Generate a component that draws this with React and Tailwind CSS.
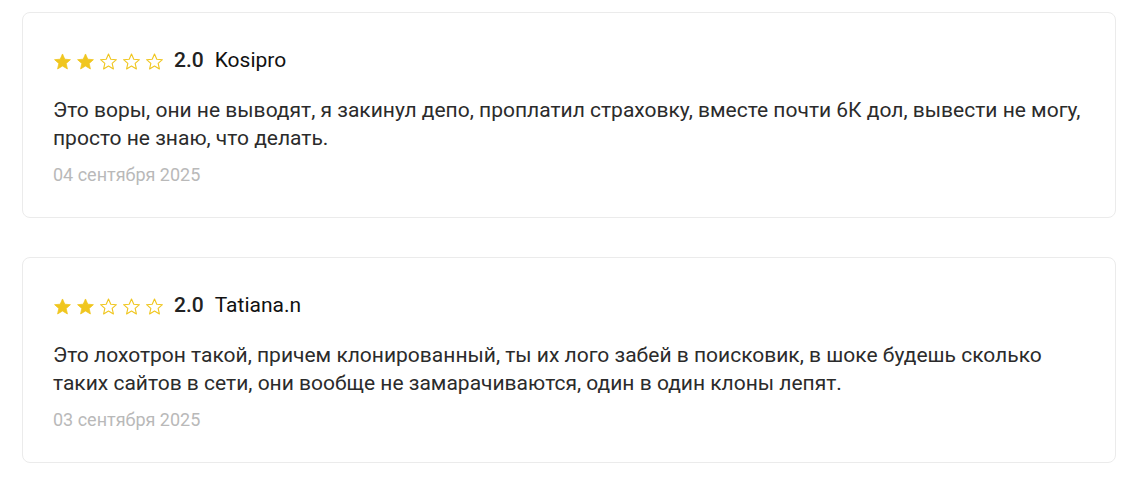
import React from 'react';

const reviews = [
    {
        rating: '2.0',
        name: 'Kosipro',
        text: 'Это воры, они не выводят, я закинул депо, проплатил страховку, вместе почти 6К дол, вывести не могу, просто не знаю, что делать.',
        date: '04 сентября 2025',
    },
    {
        rating: '2.0',
        name: 'Tatiana.n',
        text: 'Это лохотрон такой, причем клонированный, ты их лого забей в поисковик, в шоке будешь сколько таких сайтов в сети, они вообще не замарачиваются, один в один клоны лепят.',
        date: '03 сентября 2025',
    },
];

function Star({ filled }) {
    return (
        <svg width="19" height="19" viewBox="0 0 24 24" className="shrink-0">
            <path
                d="M12 2.5l2.9 6.6 7.1.6-5.4 4.7 1.6 7-6.2-3.7-6.2 3.7 1.6-7L2 9.7l7.1-.6z"
                fill={filled ? '#f0c61f' : 'none'}
                stroke="#f0c61f"
                strokeWidth={filled ? 1 : 1.4}
                strokeLinejoin="round"
            />
        </svg>
    );
}

export default function App() {
    return (
        <div className="min-h-screen bg-white px-[22px] pt-[12px] flex flex-col gap-[39px] font-['Roboto',sans-serif]">
            {reviews.map((r) => (
                <div key={r.name} className="border border-[#ebebeb] rounded-lg px-[30px] pt-[36px] pb-[30px]">
                    {/* Header */}
                    <div className="flex items-center h-6">
                        <div className="flex items-center gap-[4px]">
                            {[0, 1, 2, 3, 4].map((i) => (
                                <Star key={i} filled={i < 2} />
                            ))}
                        </div>
                        <span className="ml-[10px] text-[21px] font-medium text-[#222]">{r.rating}</span>
                        <span className="ml-[11px] text-[21px] text-[#111]">{r.name}</span>
                    </div>

                    <p className="mt-[23px] text-[21px] leading-[28px] text-[#2b2b2b]">{r.text}</p>
                    <p className="mt-[11px] text-[18px] leading-6 text-[#b9b9b9]">{r.date}</p>
                </div>
            ))}
        </div>
    );
}
